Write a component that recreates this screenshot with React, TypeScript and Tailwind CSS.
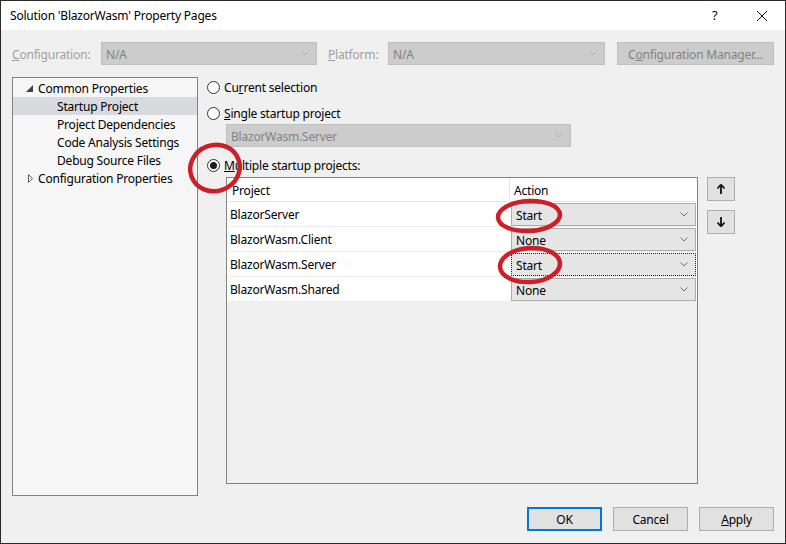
import React from 'react';

const Chevron = ({ color = '#606060' }: { color?: string }) => (
  <svg width="8" height="5" viewBox="0 0 8 5" className="shrink-0">
    <path d="M0.5 0.5 L4 4 L7.5 0.5" fill="none" stroke={color} strokeWidth="1" />
  </svg>
);

function Combo({ value, disabled, focused, className = '' }: { value: string; disabled?: boolean; focused?: boolean; className?: string }) {
  const base = disabled
    ? 'bg-[#cccccc] border-[#bfbfbf] text-[#838383]'
    : focused
      ? 'bg-[#e5e5e5] border-[#1e1e1e] border-dotted text-black'
      : 'bg-[#e5e5e5] border-[#acacac] text-black';
  return (
    <div className={`flex items-center justify-between border pl-[4px] pr-[7px] ${base} ${className}`}>
      <span className="pt-[2px]">{value}</span>
      <Chevron color={disabled ? '#b0b0b0' : '#707070'} />
    </div>
  );
}

function Radio({ checked, children }: { checked?: boolean; children: React.ReactNode }) {
  return (
    <div className="flex items-center h-[18px]">
      <span className="w-[13px] h-[13px] rounded-full border border-[#333333] bg-white flex items-center justify-center mt-[1px]">
        {checked && <span className="w-[7px] h-[7px] rounded-full bg-[#1a1a1a]" />}
      </span>
      <span className="ml-[4px] pt-[2px]">{children}</span>
    </div>
  );
}

const treeItems = [
  { label: 'Common Properties', level: 0, expanded: true },
  { label: 'Startup Project', level: 1, selected: true },
  { label: 'Project Dependencies', level: 1 },
  { label: 'Code Analysis Settings', level: 1 },
  { label: 'Debug Source Files', level: 1 },
  { label: 'Configuration Properties', level: 0, expanded: false },
];

const projects = [
  { name: 'BlazorServer', action: 'Start' },
  { name: 'BlazorWasm.Client', action: 'None' },
  { name: 'BlazorWasm.Server', action: 'Start', focused: true },
  { name: 'BlazorWasm.Shared', action: 'None' },
];

export default function App() {
  return (
    <div className="relative w-[786px] h-[544px] border border-[#2b2b2b] bg-[#f0f0f0] flex flex-col overflow-hidden text-[12px] tracking-[-0.2px] text-black font-['Noto_Sans',sans-serif]">
      {/* title bar */}
      <div className="h-[29px] bg-white flex items-center pl-[9px] shrink-0">
        <span className="flex-1 pt-[1px]">Solution 'BlazorWasm' Property Pages</span>
        <span className="w-[10px] text-[13px] mr-[34px]">?</span>
        <svg width="12" height="12" viewBox="0 0 12 12" className="mr-[17px]">
          <path d="M1 1 L11 11 M11 1 L1 11" stroke="#111" strokeWidth="1" />
        </svg>
      </div>

      <div className="flex-1 flex flex-col px-[11px] pt-[12px] pb-[12px]">
        {/* configuration row */}
        <div className="flex items-center h-[23px] text-[#a0a0a0]">
          <span className="w-[89px] pt-[2px]"><u>C</u>onfiguration:</span>
          <Combo value="N/A" disabled className="w-[216px] h-[23px]" />
          <span className="ml-[11px] w-[60px] pt-[2px]"><u>P</u>latform:</span>
          <Combo value="N/A" disabled className="w-[217px] h-[23px]" />
          <div className="ml-[12px] w-[157px] h-[23px] pt-[2px] bg-[#cccccc] border border-[#bfbfbf] flex items-center justify-center text-[#838383]">
            C<u>o</u>nfiguration Manager...
          </div>
        </div>

        {/* main area */}
        <div className="flex mt-[12px] h-[419px]">
          <div className="w-[186px] border border-[#828282] bg-[#f6f6f6] pt-[1px]">
            {treeItems.map((item) => (
              <div
                key={item.label}
                className={`h-[18px] flex items-center ${item.selected ? 'bg-[#d8dae0]' : ''}`}
              >
                {item.level === 0 ? (
                  <>
                    <span className="w-[25px] flex justify-end pr-[5px]">
                      {item.expanded ? (
                        <svg width="7" height="7" viewBox="0 0 7 7">
                          <path d="M7 0 L7 7 L0 7 Z" fill="#404040" />
                        </svg>
                      ) : (
                        <svg width="5" height="9" viewBox="0 0 5 9">
                          <path d="M0.5 0.5 L4.5 4.5 L0.5 8.5 Z" fill="none" stroke="#606060" strokeWidth="1" />
                        </svg>
                      )}
                    </span>
                    <span className="pt-[2px]">{item.label}</span>
                  </>
                ) : (
                  <span className="pl-[44px] pt-[2px]">{item.label}</span>
                )}
              </div>
            ))}
          </div>

          <div className="ml-[9px] flex-1 flex flex-col">
            <div className="mt-[1px]">
              <Radio>Cu<u>r</u>rent selection</Radio>
            </div>
            <div className="mt-[8px]">
              <Radio><u>S</u>ingle startup project</Radio>
            </div>
            <Combo value="BlazorWasm.Server" disabled className="ml-[19px] mt-[2px] w-[345px] h-[23px]" />
            <div className="mt-[9px]">
              <Radio checked><u>M</u>ultiple startup projects:</Radio>
            </div>

            <div className="flex mt-[3px]">
              <div className="ml-[19px] w-[472px] h-[307px] border border-[#828282] bg-[#f0f0f0] flex flex-col">
                <div className="flex h-[24px] bg-white border-b border-[#e5e5e5]">
                  <div className="w-[283px] pl-[5px] pt-[2px] flex items-center border-r border-[#e5e5e5]">Project</div>
                  <div className="flex-1 pl-[4px] pt-[2px] flex items-center">Action</div>
                </div>
                {projects.map((p) => (
                  <div key={p.name} className="flex h-[25px] bg-white border-b border-[#ececec]">
                    <div className="w-[283px] pl-[3px] pt-[2px] flex items-center">{p.name}</div>
                    <div className="flex-1 p-[1px]">
                      <Combo value={p.action} focused={p.focused} className="h-[23px]" />
                    </div>
                  </div>
                ))}
              </div>

              <div className="ml-[9px] flex flex-col">
                <div className="w-[28px] h-[24px] bg-[#e1e1e1] border border-[#adadad] flex items-center justify-center">
                  <svg width="10" height="12" viewBox="0 0 10 12">
                    <path d="M5 1.5 L1.5 5.5 M5 1.5 L8.5 5.5 M5 1.5 L5 11" stroke="#111" strokeWidth="1.8" fill="none" />
                  </svg>
                </div>
                <div className="mt-[9px] w-[28px] h-[24px] bg-[#e1e1e1] border border-[#adadad] flex items-center justify-center">
                  <svg width="10" height="12" viewBox="0 0 10 12">
                    <path d="M5 10.5 L1.5 6.5 M5 10.5 L8.5 6.5 M5 10.5 L5 1" stroke="#111" strokeWidth="1.8" fill="none" />
                  </svg>
                </div>
              </div>
            </div>
          </div>
        </div>

        {/* buttons */}
        <div className="flex justify-end mt-[11px] gap-[11px]">
          <div className="w-[75px] h-[24px] pt-[1px] bg-[#e1e1e1] border-2 border-[#0078d7] flex items-center justify-center">OK</div>
          <div className="w-[75px] h-[24px] pt-[1px] bg-[#e1e1e1] border border-[#adadad] flex items-center justify-center">Cancel</div>
          <div className="w-[75px] h-[24px] pt-[1px] bg-[#e1e1e1] border border-[#adadad] flex items-center justify-center"><u>A</u>pply</div>
        </div>
      </div>

      {/* red annotation circles */}
      <svg className="absolute inset-0 pointer-events-none" width="786" height="544" viewBox="0 0 786 544">
        <ellipse cx="214" cy="167" rx="25" ry="23" fill="none" stroke="#cc1f28" strokeWidth="4.5" transform="rotate(-20 214 167)" />
        <ellipse cx="528" cy="215" rx="31" ry="15" fill="none" stroke="#cc1f28" strokeWidth="4.5" transform="rotate(-3 528 215)" />
        <ellipse cx="529" cy="264" rx="30" ry="17" fill="none" stroke="#cc1f28" strokeWidth="4.5" transform="rotate(-4 529 264)" />
      </svg>
    </div>
  );
}
